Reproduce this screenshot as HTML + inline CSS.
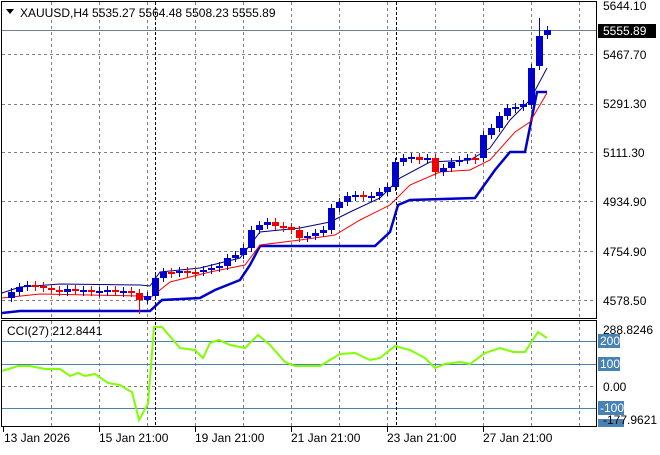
<!DOCTYPE html><html><head><style>body{margin:0;background:#fff;width:660px;height:450px;overflow:hidden;font-family:"Liberation Sans",sans-serif}</style></head><body>
<svg id="s" width="660" height="450" xmlns="http://www.w3.org/2000/svg" font-family="Liberation Sans, sans-serif" font-size="12">
<rect width="660" height="450" fill="#fff"/>
<g id="grid" stroke="#808080" stroke-dasharray="3,3" stroke-width="1"></g>
<line x1="2" y1="30.5" x2="596" y2="30.5" stroke="#708090"/>
<g stroke="#4682b4"><line x1="2" y1="341.5" x2="596" y2="341.5"/><line x1="2" y1="364.5" x2="596" y2="364.5"/><line x1="2" y1="408.5" x2="596" y2="408.5"/></g>
<line x1="2" y1="386.5" x2="596" y2="386.5" stroke="#808080" stroke-dasharray="3,3"/>
<g stroke="#000" stroke-dasharray="3,2"><line x1="155.5" y1="2" x2="155.5" y2="427"/><line x1="396.5" y1="2" x2="396.5" y2="427"/></g>
<polyline fill="none" stroke="#0000cc" stroke-width="2.5" points="2,313 20,311 150,311 162,300 200,298 215,290 240,280 250,265 260,246 375,246 390,232 398,205 410,200 475,198 495,170 510,152 525,152 537,92 547,92"/>
<polyline fill="none" stroke="#ff0000" stroke-width="1" points="2,298 40,294 140,296 150,298 170,282 210,272 245,265 260,245 300,240 335,235 360,220 390,205 410,185 440,172 470,170 490,160 515,132 530,122 547,93"/>
<polyline fill="none" stroke="#000080" stroke-width="1" points="2,293 20,287 60,284 140,285 150,286 160,272 200,268 240,258 260,232 300,228 330,222 350,212 380,198 400,178 430,162 470,160 490,148 510,120 530,100 547,68"/>
<g id="c"></g>
<polyline fill="none" stroke="#7fff00" stroke-width="2" points="2,371 18,366 30,366 45,369 60,369 70,376 78,373 85,376 95,374 108,383 120,385 128,390 132,392 139,420 148,404 154,327 162,327 180,348 195,350 203,358 210,343 219,340 230,345 245,348 258,335 270,345 285,362 295,366 320,366 340,354 355,353 370,360 380,358 395,346 410,350 425,358 435,368 445,364 460,362 470,364 485,353 500,348 513,352 525,352 538,332 547,338"/>
<g fill="none" stroke="#000"><rect x="1.5" y="1.5" width="595" height="317"/><rect x="1.5" y="320.5" width="595" height="106"/></g>
<polygon points="6,9 14,9 10,14" fill="#000"/>
<text x="20" y="17" fill="#000">XAUUSD,H4  5535.27 5564.48 5508.23 5555.89</text>
<text x="7" y="335" fill="#000">CCI(27) 212.8441</text>
<g fill="#000">
<text x="603" y="10">5644.10</text><text x="603" y="59">5467.70</text><text x="603" y="108">5291.30</text><text x="603" y="157">5111.30</text><text x="603" y="206">4934.90</text><text x="603" y="256">4754.90</text><text x="603" y="305">4578.50</text>
<text x="603" y="334">288.8246</text><text x="603" y="391">0.00</text></g>
<rect x="598" y="24" width="58" height="14" fill="#000"/><text x="603" y="35" fill="#fff">5555.89</text>
<rect x="598" y="334" width="22" height="14" fill="#4682b4"/><text x="600" y="345" fill="#fff">200</text>
<rect x="598" y="357" width="22" height="14" fill="#4682b4"/><text x="600" y="368" fill="#fff">100</text>
<rect x="598" y="401" width="26" height="14" fill="#4682b4"/><text x="600" y="412" fill="#fff">-100</text>
<rect x="598" y="419" width="26" height="8" fill="#4682b4"/><text x="603" y="424" fill="#000">-177.9621</text>
<g stroke="#000"><line x1="3.5" y1="427" x2="3.5" y2="432"/><line x1="99.5" y1="427" x2="99.5" y2="432"/><line x1="195.5" y1="427" x2="195.5" y2="432"/><line x1="291.5" y1="427" x2="291.5" y2="432"/><line x1="387.5" y1="427" x2="387.5" y2="432"/><line x1="483.5" y1="427" x2="483.5" y2="432"/></g>
<g fill="#000"><text x="4" y="442">13 Jan 2026</text><text x="99" y="442">15 Jan 21:00</text><text x="195" y="442">19 Jan 21:00</text><text x="291" y="442">21 Jan 21:00</text><text x="387" y="442">23 Jan 21:00</text><text x="483" y="442">27 Jan 21:00</text></g>
</svg>
<script>
var NS="http://www.w3.org/2000/svg",g=document.getElementById('grid'),c=document.getElementById('c');
function L(p,a){var e=document.createElementNS(NS,'line');for(var k in a)e.setAttribute(k,a[k]);p.appendChild(e);return e}
function R(p,a){var e=document.createElementNS(NS,'rect');for(var k in a)e.setAttribute(k,a[k]);p.appendChild(e)}
for(var x=51;x<596;x+=48){L(g,{x1:x+.5,y1:2,x2:x+.5,y2:318});L(g,{x1:x+.5,y1:321,x2:x+.5,y2:427});}
[54,104,152,201,251,300].forEach(function(y){L(g,{x1:2,y1:y+.5,x2:596,y2:y+.5})});
var cl=[292,287,285,286,288,290,292,289,291,290,292,291,290,292,291,293,300,296,278,272,272,271,272,272,270,268,266,258,255,248,230,225,222,226,227,230,238,236,233,230,208,202,196,195,197,196,192,187,162,158,157,160,158,172,168,162,160,158,158,135,128,116,108,107,104,68,36,30];
for(var i=0;i<cl.length;i++){var x=11+8*i,o=(i==0?298:cl[i-1]),cc=cl[i];if(i==65)o=105;if(i==66)o=66;if(i==67)o=35;
var bull=cc<o,col=bull?'#0000cc':'#ee0000',t=Math.min(o,cc),b=Math.max(o,cc);if(b-t<2){b=t+2;}
var hi=t-4-(i==66?14:0),lo=b+4+(i==16?10:0);
L(c,{x1:x+.5,y1:hi,x2:x+.5,y2:lo,stroke:col});R(c,{x:x-3,y:t,width:7,height:b-t,fill:col});}
</script>
</body></html>
